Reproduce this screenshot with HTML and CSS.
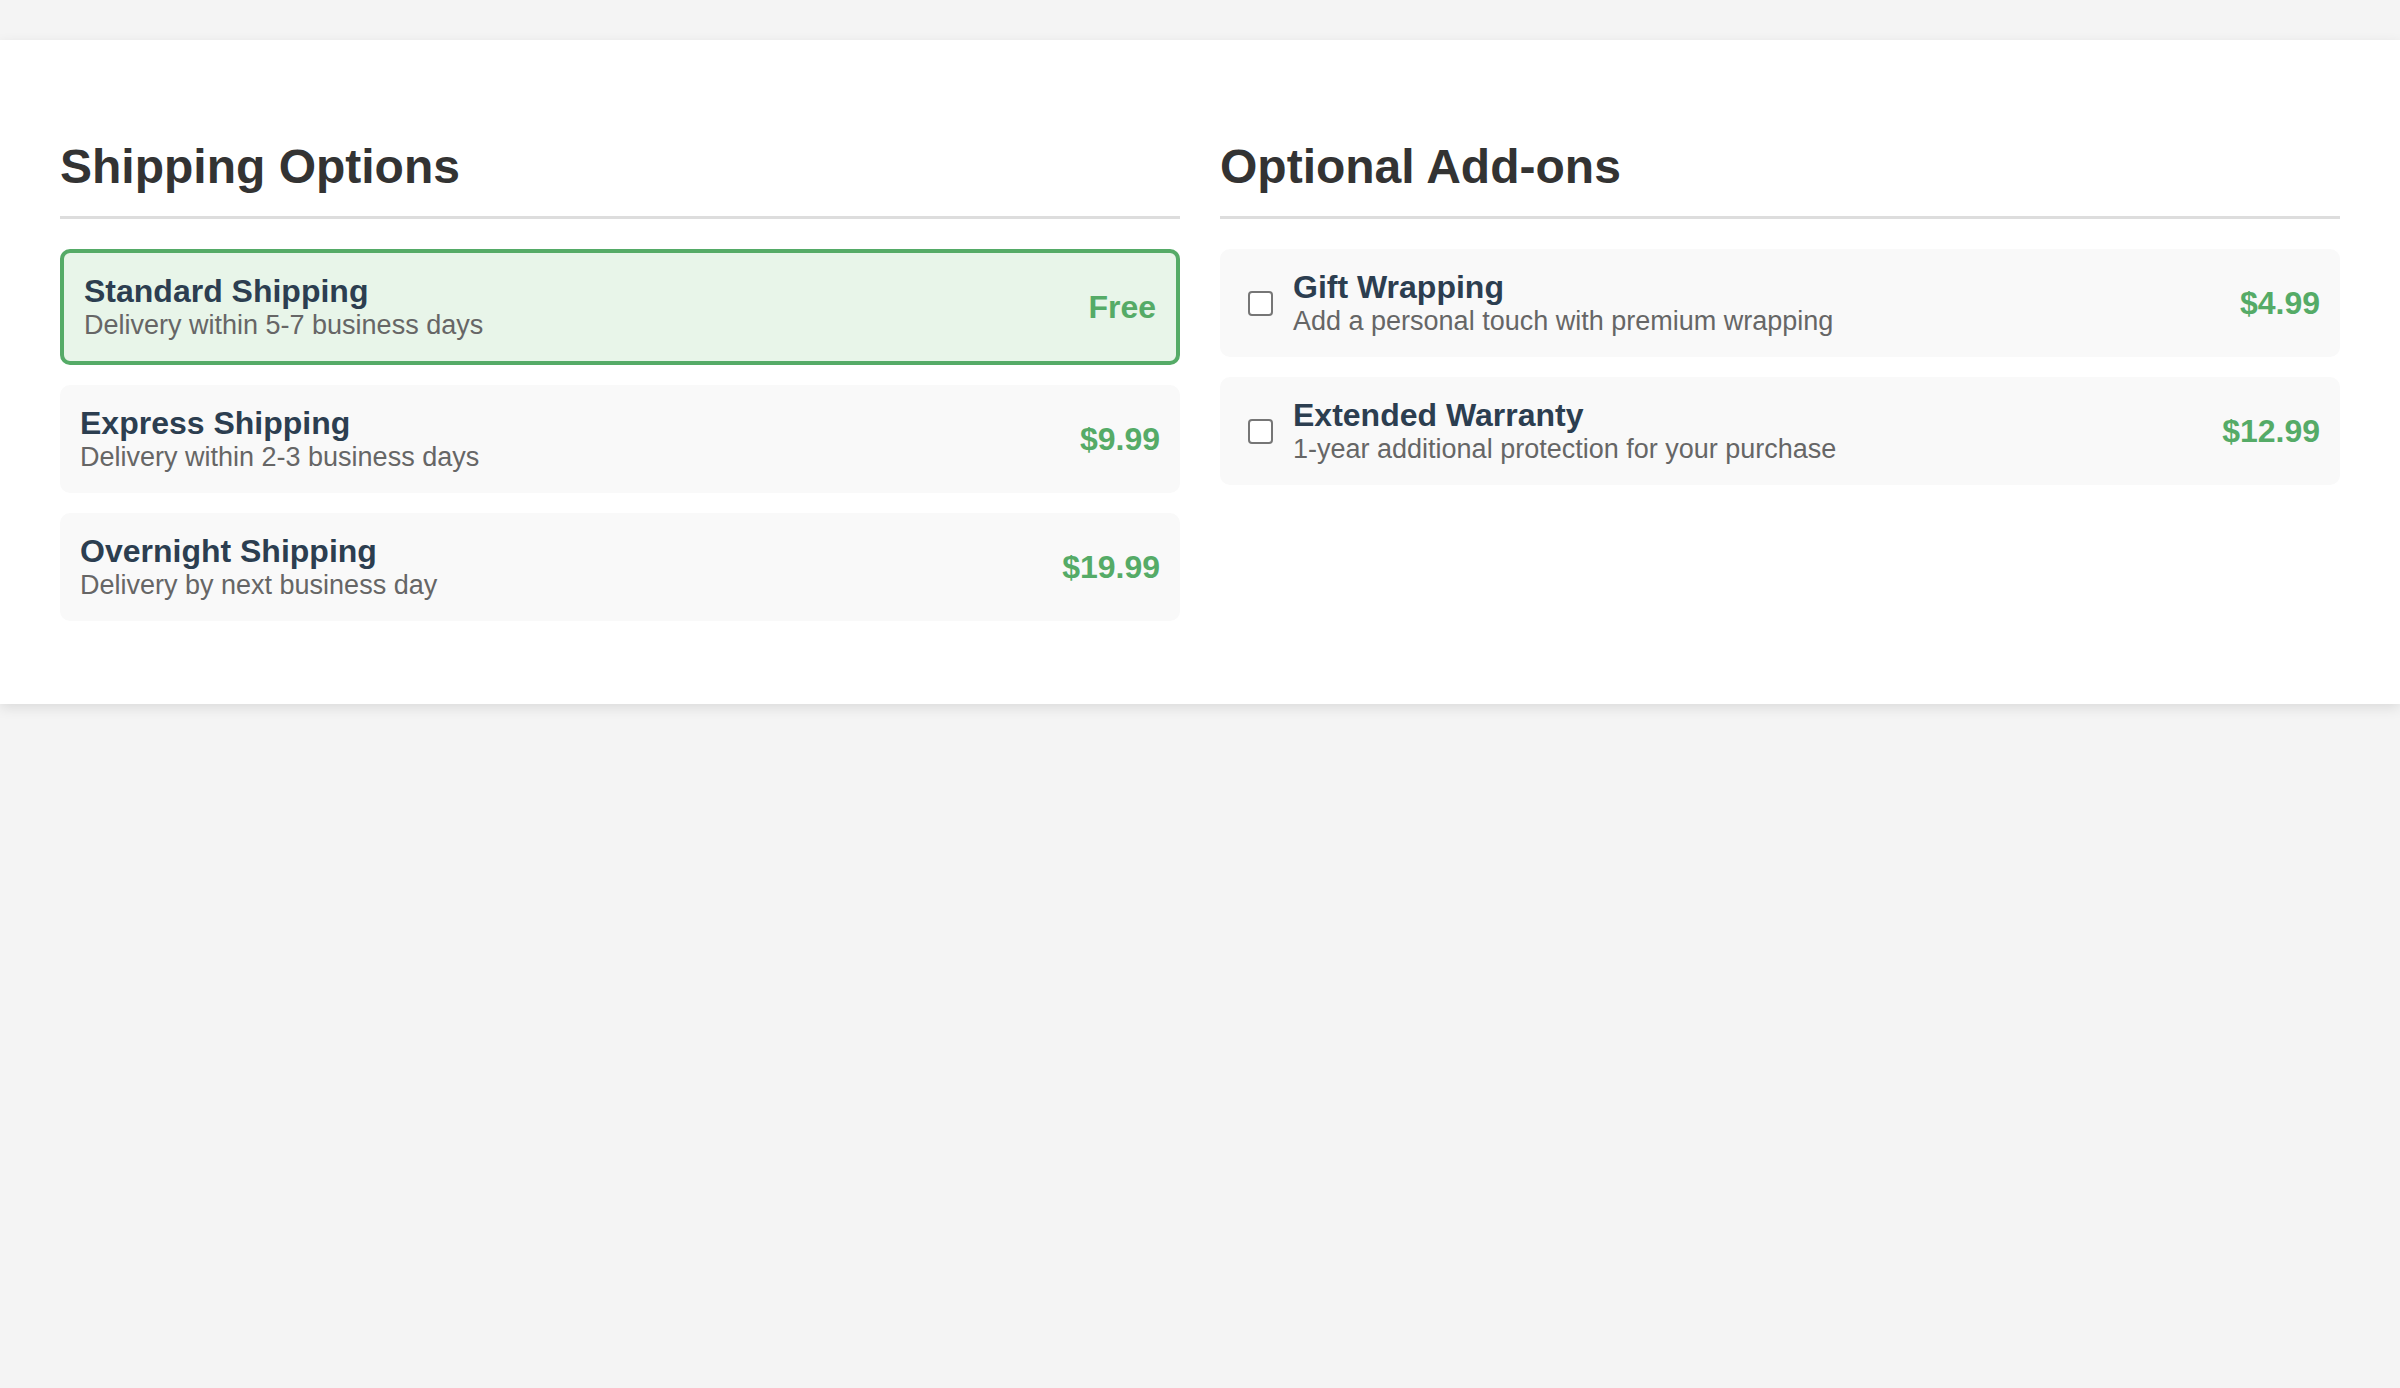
FILE: index.html
```html
<!DOCTYPE html>
<html lang="en">
<head>
<meta charset="utf-8">
<title>Shipping Options</title>
<link rel="stylesheet" href="styles.css">
</head>
<body>
<main class="panel">
  <section class="column">
    <h2 class="section-title">Shipping Options</h2>
    <div class="option-list">
      <div class="option option-selected">
        <div class="option-info">
          <div class="option-name">Standard Shipping</div>
          <div class="option-desc">Delivery within 5-7 business days</div>
        </div>
        <div class="option-price">Free</div>
      </div>
      <div class="option">
        <div class="option-info">
          <div class="option-name">Express Shipping</div>
          <div class="option-desc">Delivery within 2-3 business days</div>
        </div>
        <div class="option-price">$9.99</div>
      </div>
      <div class="option">
        <div class="option-info">
          <div class="option-name">Overnight Shipping</div>
          <div class="option-desc">Delivery by next business day</div>
        </div>
        <div class="option-price">$19.99</div>
      </div>
    </div>
  </section>
  <section class="column">
    <h2 class="section-title">Optional Add-ons</h2>
    <div class="option-list">
      <label class="option addon">
        <input type="checkbox" class="addon-check">
        <div class="option-info">
          <div class="option-name">Gift Wrapping</div>
          <div class="option-desc">Add a personal touch with premium wrapping</div>
        </div>
        <div class="option-price">$4.99</div>
      </label>
      <label class="option addon">
        <input type="checkbox" class="addon-check">
        <div class="option-info">
          <div class="option-name">Extended Warranty</div>
          <div class="option-desc">1-year additional protection for your purchase</div>
        </div>
        <div class="option-price">$12.99</div>
      </label>
    </div>
  </section>
</main>
</body>
</html>
```

FILE: styles.css
```css
* {
  box-sizing: border-box;
}

html, body {
  margin: 0;
  padding: 0;
}

body {
  background: #f4f4f4;
  font-family: "Liberation Sans", Arial, Helvetica, sans-serif;
  padding-top: 40px;
  min-height: 100vh;
}

.panel {
  background: #ffffff;
  box-shadow: 0 4px 12px rgba(0, 0, 0, 0.1);
  padding: 99px 60px 83px;
  display: grid;
  grid-template-columns: 1fr 1fr;
  gap: 40px;
  align-items: start;
}

.section-title {
  margin: 0 0 30px;
  font-size: 48px;
  line-height: 56px;
  font-weight: 700;
  color: #333333;
  padding-bottom: 21px;
  border-bottom: 3px solid #dddddd;
}

.option-list {
  display: flex;
  flex-direction: column;
  gap: 20px;
}

.option {
  display: flex;
  align-items: center;
  gap: 20px;
  padding: 20px;
  background: #f9f9f9;
  border-radius: 10px;
}

.option-selected {
  background: #e8f5e9;
  border: 4px solid #55ab67;
}

.option-info {
  flex: 1;
  min-width: 0;
}

.option-name {
  font-size: 32px;
  line-height: 36px;
  font-weight: 700;
  color: #2c3e50;
}

.option-desc {
  font-size: 27px;
  line-height: 32px;
  color: #666666;
}

.option-price {
  font-size: 32px;
  font-weight: 700;
  color: #55ab67;
  white-space: nowrap;
}

.addon {
  cursor: pointer;
}

.addon-check {
  appearance: none;
  -webkit-appearance: none;
  margin: 0 0 0 8px;
  width: 25px;
  height: 25px;
  border: 2px solid #767676;
  border-radius: 4px;
  background: #ffffff;
  flex: none;
}
```
